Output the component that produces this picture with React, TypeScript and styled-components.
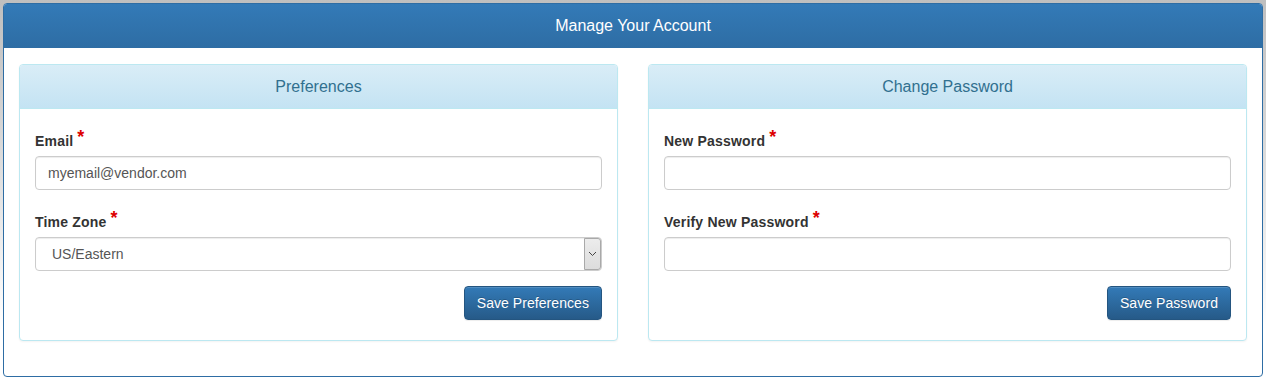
import React from "react";
import styled, { createGlobalStyle } from "styled-components";

const GlobalStyle = createGlobalStyle`
  * { box-sizing: border-box; }
  html, body { margin: 0; padding: 0; }
  body {
    font-family: "Liberation Sans", Arial, Helvetica, sans-serif;
    font-size: 14px;
    line-height: 20px;
    color: #333;
    background: linear-gradient(180deg, #bfbfbf 0px, #d4d4d4 120px, #ffffff 330px);
    height: 381px;
    overflow: hidden;
  }
`;

const Page = styled.div`
  padding: 3px 0 0 3px;
`;

const OuterPanel = styled.section`
  width: 1260px;
  height: 374px;
  border: 1px solid #2e6da4;
  border-radius: 4px;
  background: #fff;
  display: flex;
  flex-direction: column;
  overflow: hidden;
`;

const OuterHeading = styled.header`
  height: 44px;
  flex: none;
  display: flex;
  align-items: center;
  justify-content: center;
  background: linear-gradient(180deg, #337ab7 0%, #2e6da4 100%);
  color: #fff;
  font-size: 16px;
`;

const OuterBody = styled.div`
  padding: 16px 15px 0;
  display: grid;
  grid-template-columns: 599px 599px;
  column-gap: 30px;
  align-items: start;
`;

const Panel = styled.section`
  border: 1px solid #bce8f1;
  border-radius: 4px;
  background: #fff;
  box-shadow: 0 1px 2px rgba(0, 0, 0, 0.05);
  overflow: hidden;
`;

const PanelHeading = styled.header`
  height: 44px;
  display: flex;
  align-items: center;
  justify-content: center;
  background: linear-gradient(180deg, #d9edf7 0%, #c4e3f3 100%);
  border-bottom: 1px solid #bce8f1;
  color: #31708f;
  font-size: 16px;
`;

const PanelBody = styled.div`
  padding: 0 15px 20px;
`;

const FormGroup = styled.div`
  padding-top: 22px;
`;

const Label = styled.label`
  display: block;
  height: 20px;
  margin-bottom: 5px;
  font-weight: bold;
  font-size: 14px;
  line-height: 20px;
  letter-spacing: 0.2px;
  color: #333;
  white-space: nowrap;
`;

const Required = styled.span`
  position: relative;
  top: -3px;
  margin-left: 4px;
  color: #dd0000;
  font-size: 18px;
  line-height: 0;
  font-weight: bold;
`;

const Input = styled.input`
  display: block;
  width: 100%;
  height: 34px;
  padding: 6px 12px;
  font-family: inherit;
  font-size: 14px;
  color: #555;
  background: #fff;
  border: 1px solid #ccc;
  border-radius: 4px;
  box-shadow: inset 0 1px 1px rgba(0, 0, 0, 0.075);
  outline: none;
`;

const SelectWrap = styled.div`
  position: relative;
`;

const Select = styled.select`
  display: block;
  width: 100%;
  height: 34px;
  padding: 6px 20px 6px 16px;
  font-family: inherit;
  font-size: 14px;
  color: #555;
  background: #fff;
  border: 1px solid #ccc;
  border-radius: 4px;
  box-shadow: inset 0 1px 1px rgba(0, 0, 0, 0.075);
  appearance: none;
  -webkit-appearance: none;
  outline: none;
`;

const ArrowBox = styled.span`
  position: absolute;
  top: 1px;
  right: 1px;
  bottom: 1px;
  width: 17px;
  display: flex;
  align-items: center;
  justify-content: center;
  background: linear-gradient(180deg, #ececec 0%, #dcdcdc 100%);
  border: 1px solid #a9a9a9;
  border-radius: 0 3px 3px 0;
  pointer-events: none;
`;

const Actions = styled.div`
  display: flex;
  justify-content: flex-end;
  padding-top: 15px;
`;

const Button = styled.button`
  height: 34px;
  padding: 6px 12px;
  font-family: inherit;
  font-size: 14px;
  line-height: 20px;
  letter-spacing: 0.06px;
  color: #fff;
  background: linear-gradient(180deg, #337ab7 0%, #265a88 100%);
  border: 1px solid #245580;
  border-radius: 4px;
  text-shadow: 0 -1px 0 rgba(0, 0, 0, 0.2);
  box-shadow: inset 0 1px 0 rgba(255, 255, 255, 0.15), 0 1px 1px rgba(0, 0, 0, 0.075);
  cursor: pointer;
`;

const Field: React.FC<{ label: string; children: React.ReactNode }> = ({ label, children }) => (
  <FormGroup>
    <Label>
      {label}
      <Required>*</Required>
    </Label>
    {children}
  </FormGroup>
);

export default function App() {
  return (
    <>
      <GlobalStyle />
      <Page>
        <OuterPanel>
          <OuterHeading>Manage Your Account</OuterHeading>
          <OuterBody>
            <Panel>
              <PanelHeading>Preferences</PanelHeading>
              <PanelBody>
                <Field label="Email">
                  <Input type="text" defaultValue="myemail@vendor.com" />
                </Field>
                <Field label="Time Zone">
                  <SelectWrap>
                    <Select defaultValue="US/Eastern">
                      <option>US/Eastern</option>
                      <option>US/Central</option>
                      <option>US/Mountain</option>
                      <option>US/Pacific</option>
                    </Select>
                    <ArrowBox>
                      <svg width="9" height="6" viewBox="0 0 9 6">
                        <path d="M1 1 L4.5 4.5 L8 1" fill="none" stroke="#444" strokeWidth="1" />
                      </svg>
                    </ArrowBox>
                  </SelectWrap>
                </Field>
                <Actions>
                  <Button type="button">Save Preferences</Button>
                </Actions>
              </PanelBody>
            </Panel>
            <Panel>
              <PanelHeading>Change Password</PanelHeading>
              <PanelBody>
                <Field label="New Password">
                  <Input type="password" />
                </Field>
                <Field label="Verify New Password">
                  <Input type="password" />
                </Field>
                <Actions>
                  <Button type="button">Save Password</Button>
                </Actions>
              </PanelBody>
            </Panel>
          </OuterBody>
        </OuterPanel>
      </Page>
    </>
  );
}
